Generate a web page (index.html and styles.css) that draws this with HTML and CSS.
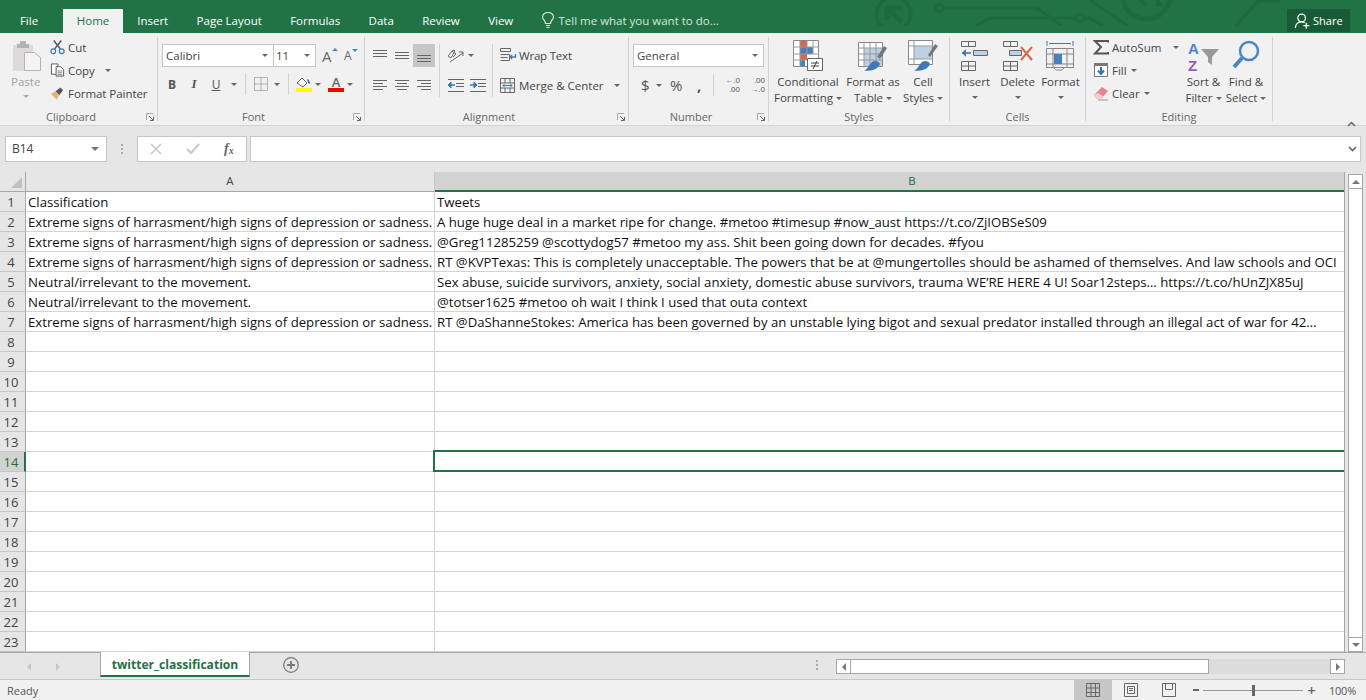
FILE: index.html
```html
<!DOCTYPE html>
<html lang="en">
<head>
<meta charset="utf-8">
<title>twitter_classification - Excel</title>
<link rel="stylesheet" href="styles.css">
</head>
<body>
<div class="app">
  <header class="titlebar">
    <svg class="circuit" width="440" height="26" viewBox="840 0 440 26" fill="none" stroke="#1e6a40" stroke-width="3">
      <circle cx="893.500" cy="14" r="17" stroke-width="4"/>
      <path d="M887 20V8h14M888 9l14 13" stroke-width="5"/>
      <circle cx="939" cy="8" r="3.500" stroke-width="2.500"/>
      <path d="M943 8h94l25 18M976 26l14-8h86"/>
      <circle cx="1080" cy="18" r="4" stroke-width="2.500"/>
      <path d="M1084 18h6l13 8M1090 0l38 26M1236 26l22-25h22"/>
      <circle cx="1146.500" cy="-5" r="24" stroke-width="5"/>
      <path d="M1140 0l6 5M1158 0v5h5" stroke-width="4"/>
    </svg>
    <nav class="tabs">
      <span class="tab tab-file">File</span>
      <span class="tab tab-home">Home</span>
      <span class="tab">Insert</span>
      <span class="tab">Page Layout</span>
      <span class="tab">Formulas</span>
      <span class="tab">Data</span>
      <span class="tab">Review</span>
      <span class="tab">View</span>
      <span class="tell">
        <svg width="14" height="17" viewBox="0 0 14 17" fill="none" stroke="#d6e6dc" stroke-width="1.200"><path d="M4.500 11.500C4.500 8.500 1.500 7.500 1.500 5a5.500 4.500 0 0 1 11 0c0 2.500-3 3.500-3 6.500zM5 13.500h4M5.500 15.500h3"/></svg>
        Tell me what you want to do...
      </span>
    </nav>
    <span class="share">
      <svg width="17" height="18" viewBox="0 0 20 20" fill="none" stroke="#fff" stroke-width="1.500"><circle cx="9" cy="6.500" r="4.500"/><path d="M1.500 18c.5-4 3-7 7.500-7 1.500 0 2.500.3 3.500 1M11 15.500h7M14.500 12v7"/></svg>
      Share
    </span>
  </header>

  <section class="ribbon">
    <div class="group g-clip">
      <div class="group-body clip-body">
        <div class="paste">
          <svg width="28" height="30" viewBox="0 0 28 30"><path d="M0 4h20v26H0z" fill="#ded9dc"/><path d="M7 3h6V0H7zM4 3h12v4H4z" fill="#b5b2b4"/><path d="M11.500 11.500h10l6 5v13h-16z" fill="#f4f3f4" stroke="#b5b2b4"/></svg>
          <span class="paste-label">Paste</span>
          <span class="caret caret-light"></span>
        </div>
        <div class="clip-list">
          <div class="clip-item">
            <svg width="15" height="16" viewBox="0 0 16 16" fill="none"><path d="M4 1l7 9M12 1l-7 9" stroke="#555" stroke-width="1.600"/><circle cx="3.500" cy="12.500" r="2.500" stroke="#3f78b5" stroke-width="1.300"/><circle cx="12.500" cy="12.500" r="2.500" stroke="#3f78b5" stroke-width="1.300"/></svg>
            <span>Cut</span>
          </div>
          <div class="clip-item">
            <svg width="15" height="16" viewBox="0 0 16 16" fill="#fff" stroke="#555"><path d="M1.500 1.500h7v11h-7z"/><path d="M6.500 4.500h5l3 3v7h-8z"/><path d="M8 9h5M8 11h5M8 13h5" stroke-width=".8"/></svg>
            <span>Copy</span><span class="caret copy-caret"></span>
          </div>
          <div class="clip-item">
            <svg width="15" height="16" viewBox="0 0 16 16"><path d="M1 9l6 6 3-5-4-4z" fill="#e5b36f"/><path d="M6 6l5-4 3 3-4 5z" fill="#555"/></svg>
            <span>Format Painter</span>
          </div>
        </div>
      </div>
      <div class="group-label has-launcher">Clipboard<svg class="launcher" width="8" height="8" viewBox="0 0 8 8" fill="none"><path d="M.5 7V.5H7" stroke="#aaa"/><path d="M3 3l4 4M7.500 4v3.500H4" stroke="#666"/></svg></div>
    </div>

    <div class="group g-font">
      <div class="group-body stack">
        <div class="row font-row">
          <div class="combo combo-font">Calibri<span class="caret"></span></div>
          <div class="combo combo-size">11<span class="caret"></span></div>
          <span class="grow-a">A<i class="tip tip-up"></i></span>
          <span class="shrink-a">A<i class="tip tip-down"></i></span>
        </div>
        <div class="row format-row">
          <b class="fmt fmt-b">B</b>
          <i class="fmt fmt-i">I</i>
          <u class="fmt fmt-u">U</u>
          <span class="caret"></span>
          <span class="vsep sep-a"></span>
          <svg class="borders" width="14" height="14" viewBox="0 0 14 14" fill="none" stroke="#777" stroke-dasharray="1 1"><path d="M.5.500h13v13H.5zM7 .5v13M.5 7h13"/></svg>
          <span class="caret caret-b"></span>
          <span class="vsep sep-b"></span>
          <span class="colorbtn">
            <svg width="16" height="11" viewBox="0 0 16 11"><path d="M1 6l5-5 5 5-4 4z" fill="#fff" stroke="#666"/><path d="M11 2c2 .5 3 2 3 5l-2-1z" fill="#3f78b5"/></svg>
            <i class="bar bar-yellow"></i>
          </span>
          <span class="caret caret-c"></span>
          <span class="colorbtn colorbtn-a">
            <span class="a-letter">A</span>
            <i class="bar bar-red"></i>
          </span>
          <span class="caret caret-d"></span>
        </div>
      </div>
      <div class="group-label has-launcher">Font<svg class="launcher" width="8" height="8" viewBox="0 0 8 8" fill="none"><path d="M.5 7V.5H7" stroke="#aaa"/><path d="M3 3l4 4M7.500 4v3.500H4" stroke="#666"/></svg></div>
    </div>

    <div class="group g-align">
      <div class="group-body align-body">
        <div class="align-icons">
          <span class="lines"><svg width="14" height="14" viewBox="0 0 14 14" stroke="#666"><path d="M0 1.500h14M0 4.500h14M0 7.500h14"/></svg></span>
          <span class="lines"><svg width="14" height="14" viewBox="0 0 14 14" stroke="#666"><path d="M0 3.500h14M0 6.500h14M0 9.500h14"/></svg></span>
          <span class="lines lines-on"><svg width="14" height="14" viewBox="0 0 14 14" stroke="#666"><path d="M0 6.500h14M0 9.500h14M0 12.500h14"/></svg></span>
          <span class="lines"><svg width="14" height="12" viewBox="0 0 14 12" stroke="#666"><path d="M0 .5h14M0 3.500h10M0 6.500h14M0 9.500h10"/></svg></span>
          <span class="lines"><svg width="14" height="12" viewBox="0 0 14 12" stroke="#666"><path d="M0 .5h14M2 3.500h10M0 6.500h14M2 9.500h10"/></svg></span>
          <span class="lines"><svg width="14" height="12" viewBox="0 0 14 12" stroke="#666"><path d="M0 .5h14M4 3.500h10M0 6.500h14M4 9.500h10"/></svg></span>
        </div>
        <div class="align-mid">
          <div class="orient">
            <svg width="17" height="15" viewBox="0 0 17 15" fill="none" stroke="#666"><path d="M1 8l5-6 2 1-4 7zM5 3l4 3-3 3M3 14l13-9M12 4h4v4" /></svg>
            <span class="caret"></span>
          </div>
          <span class="hsep"></span>
          <div class="indent">
            <svg width="17" height="14" viewBox="0 0 17 14" stroke="#666" fill="none"><path d="M1 .5h16M9 4.500h8M9 7.500h8M1 12.500h16"/><path d="M1 6h7" stroke="#3f78b5" stroke-width="1.500"/><path d="M4 3L1 6l3 3z" fill="#3f78b5" stroke="#3f78b5"/></svg>
            <svg width="17" height="14" viewBox="0 0 17 14" stroke="#666" fill="none"><path d="M1 .5h16M9 4.500h8M9 7.500h8M1 12.500h16"/><path d="M1 6h6" stroke="#3f78b5" stroke-width="1.500"/><path d="M5 3l3 3-3 3z" fill="#3f78b5" stroke="#3f78b5"/></svg>
          </div>
        </div>
        <div class="align-wrap">
          <div class="wrap-item">
            <svg width="17" height="15" viewBox="0 0 17 15" fill="none" stroke="#666"><path d="M.5.500h10v3H.5zM.5 6.500h9M.5 9.500h7M.5 12.500h9V6.500" /><path d="M10 9h5.500V6M10 9l2-2M10 9l2 2" stroke="#3f78b5" stroke-width="1.300"/></svg>
            <span class="wrap-label">Wrap Text</span>
          </div>
          <div class="wrap-item merge-item">
            <svg width="15" height="15" viewBox="0 0 15 15" fill="none" stroke="#666"><path d="M.5.500h14v14H.5zM.5 5h14M.5 10h14M5 .5V5M10 .5V5M5 10v4.500M10 10v4.500"/><path d="M3 7.500h9M3 7.500l1.500-1.500M3 7.500L4.500 9M12 7.500L10.500 6M12 7.500L10.500 9" stroke="#3f78b5"/></svg>
            <span class="merge-label">Merge &amp; Center</span>
            <span class="caret"></span>
          </div>
        </div>
      </div>
      <div class="group-label has-launcher">Alignment<svg class="launcher" width="8" height="8" viewBox="0 0 8 8" fill="none"><path d="M.5 7V.5H7" stroke="#aaa"/><path d="M3 3l4 4M7.500 4v3.500H4" stroke="#666"/></svg></div>
    </div>

    <div class="group g-number">
      <div class="group-body stack">
        <div class="combo combo-number">General<span class="caret"></span></div>
        <div class="row number-row">
          <span class="dollar">$</span><span class="caret"></span>
          <span class="percent">%</span>
          <span class="comma">,</span>
          <span class="vsep"></span>
          <span class="dec"><em class="dec-blue">←</em>.0<br>.00</span>
          <span class="dec dec-2">.00<br><em class="dec-blue">→</em>.0</span>
        </div>
      </div>
      <div class="group-label has-launcher">Number<svg class="launcher" width="8" height="8" viewBox="0 0 8 8" fill="none"><path d="M.5 7V.5H7" stroke="#aaa"/><path d="M3 3l4 4M7.500 4v3.500H4" stroke="#666"/></svg></div>
    </div>

    <div class="group g-styles">
      <div class="group-body big-row">
        <div class="big big-cf">
          <svg width="30" height="32" viewBox="0 0 30 32"><path d="M.5.500h25v26H.5z" fill="#fff" stroke="#888"/><path d="M7 1h7v6H7zM7 14h7v6H7z" fill="#d9674a"/><path d="M7 7h13v7H7zM7 20h5v6H7z" fill="#4a7fbd"/><path d="M7 0v27M14 0v14M20 0v14M0 7h26M0 14h26M0 20h14" stroke="#999" fill="none"/><path d="M14.500 18.500h15v12h-15z" fill="#fff" stroke="#666"/><path d="M18 23h8M18 26h8M24 21l-4 8" stroke="#444" fill="none"/></svg>
          <span>Conditional</span>
          <span>Formatting<i class="caret inline-caret"></i></span>
        </div>
        <div class="big big-ft">
          <svg width="30" height="32" viewBox="0 0 30 32"><path d="M.5 2.500h24v24H.5z" fill="#fff" stroke="#888"/><path d="M6 8h18v18H6z" fill="#bcd0e6"/><path d="M.5 8h24M.5 14h24M.5 20h24M6 2.500v24M12 2.500v24M18 2.500v24" stroke="#999" fill="none"/><path d="M19 17l7-11 3 2-7 11z" fill="#777"/><path d="M6 31c3-1 5-6 8-9 3-2 7-1 8 2-2 4-5 7-16 7z" fill="#3f78b5"/></svg>
          <span>Format as</span>
          <span>Table<i class="caret inline-caret"></i></span>
        </div>
        <div class="big big-cs">
          <svg width="30" height="32" viewBox="0 0 30 32"><path d="M.5.500h24v24H.5z" fill="#fff" stroke="#888"/><path d="M6 6h18v13H6z" fill="#bcd0e6"/><path d="M.5 6h24M.5 19h24M6 .5V25" stroke="#999" fill="none"/><path d="M20 15l7-11 3 2-8 11z" fill="#777"/><path d="M6 31c3-1 5-6 8-9 3-2 7-1 8 2-2 4-5 7-16 7z" fill="#3f78b5"/></svg>
          <span>Cell</span>
          <span>Styles<i class="caret inline-caret"></i></span>
        </div>
      </div>
      <div class="group-label">Styles</div>
    </div>

    <div class="group g-cells">
      <div class="group-body big-row">
        <div class="big big-cell">
          <svg width="27" height="32" viewBox="0 0 27 32" fill="none"><path d="M.5 1.500h14v5H.5zM7.500 1.500v5M.5 21.500h14v9H.5zM.5 26h14M7.500 21.500v9M12.500 10.500h14v5h-14zM19.500 10.500v5" stroke="#666"/><path d="M13 11h13v4H13z" fill="#bcd0e6"/><path d="M1 13h9" stroke="#3f78b5" stroke-width="1.600"/><path d="M5 9l-4 4 4 4z" fill="#3f78b5"/></svg>
          <span>Insert</span><i class="caret big-caret"></i>
        </div>
        <div class="big big-cell big-del">
          <svg width="30" height="32" viewBox="0 0 30 32" fill="none"><path d="M.5 1.500h14v5H.5zM7.500 1.500v5M.5 21.500h14v9H.5zM.5 26h14M7.500 21.500v9M6.500 10.500h12v5h-12z" stroke="#666"/><path d="M7 11h11v4H7z" fill="#bcd0e6"/><path d="M18 7l11 13M29 7L18 20" stroke="#d9674a" stroke-width="2"/></svg>
          <span>Delete</span><i class="caret big-caret"></i>
        </div>
        <div class="big big-cell">
          <svg width="29" height="32" viewBox="0 0 29 32" fill="none"><path d="M1 1v5M27 1v5M3 3.500h22" stroke="#3f78b5"/><path d="M.5 8.500h27v19H.5zM.5 14h27M.5 24h27M7 8v20M21 8v20" stroke="#888"/><path d="M8 14h8v10H8z" fill="#4a7fbd"/><path d="M8 28l2 2h6l2-2" stroke="#888"/></svg>
          <span>Format</span><i class="caret big-caret"></i>
        </div>
      </div>
      <div class="group-label">Cells</div>
    </div>

    <div class="group g-edit">
      <div class="group-body edit-body">
        <div class="edit-list">
          <div class="edit-item">
            <svg width="16" height="15" viewBox="0 0 16 15" fill="none" stroke="#555" stroke-width="2"><path d="M15 2.500V1H2l6 6-6 6.500h13V12"/></svg>
            <span>AutoSum</span><span class="caret edit-caret"></span>
          </div>
          <div class="edit-item">
            <svg width="16" height="16" viewBox="0 0 16 16"><path d="M1.500 1.500h13v13h-13z" fill="#fff" stroke="#777"/><path d="M1 1h14v3H1z" fill="#777"/><path d="M8 5v7M5 8.500l3 3.500 3-3.500" fill="none" stroke="#2e75b6" stroke-width="2"/></svg>
            <span>Fill</span><i class="caret"></i>
          </div>
          <div class="edit-item">
            <svg width="16" height="16" viewBox="0 0 16 16"><path d="M1 10l8-8 6 4-7 8H4z" fill="#e8828c"/><path d="M1 10l3 4h4l2-3-5-3z" fill="#f0d0d3"/><path d="M5 15h10" stroke="#999"/></svg>
            <span>Clear</span><i class="caret"></i>
          </div>
        </div>
        <div class="big big-sort">
          <svg width="32" height="32" viewBox="0 0 32 32"><path d="M13 9h18l-7 8v8l-4-3v-5z" fill="#999"/><text x="0" y="14" class="az az-a">A</text><text x="0" y="31" class="az az-z">Z</text></svg>
          <span>Sort &amp;</span>
          <span>Filter<i class="caret inline-caret"></i></span>
        </div>
        <div class="big big-find">
          <svg width="28" height="32" viewBox="0 0 28 32" fill="none" stroke="#4a86c5"><circle cx="17" cy="11" r="9" stroke-width="2.500"/><path d="M10 18L2 27" stroke-width="4"/></svg>
          <span>Find &amp;</span>
          <span>Select<i class="caret inline-caret"></i></span>
        </div>
      </div>
      <div class="group-label">Editing</div>
    </div>
    <div class="collapse"><svg width="9" height="6" viewBox="0 0 9 6" fill="none" stroke="#666" stroke-width="1.500"><path d="M1 5l3.500-3.500L8 5"/></svg></div>
  </section>

  <section class="formulabar">
    <div class="namebox">B14<span class="caret"></span></div>
    <span class="dots"></span>
    <div class="fx-buttons">
      <svg width="12" height="12" viewBox="0 0 12 12" stroke="#c8c8c8" stroke-width="1.600" fill="none"><path d="M1 1l10 10M11 1L1 11"/></svg>
      <svg width="14" height="12" viewBox="0 0 14 12" stroke="#c8c8c8" stroke-width="2" fill="none"><path d="M1 6l4 4 8-9"/></svg>
      <span class="fx">f<sub>x</sub></span>
    </div>
    <div class="formula-input">
      <svg width="9" height="6" viewBox="0 0 9 6" fill="none" stroke="#666" stroke-width="1.700"><path d="M1 1l3.500 3.500L8 1"/></svg>
    </div>
  </section>

  <section class="sheet">
    <div class="gridwrap">
      <table class="grid">
        <colgroup><col class="col-h"><col class="col-a"><col class="col-b"></colgroup>
        <thead>
          <tr><th class="corner"><i class="corner-tri"></i></th><th class="colhead">A</th><th class="colhead colhead-on">B</th></tr>
        </thead>
        <tbody>
          <tr><th>1</th><td>Classification</td><td>Tweets</td></tr>
          <tr><th>2</th><td>Extreme signs of harrasment/high signs of depression or sadness.</td><td>A huge huge deal in a market ripe for change. #metoo #timesup #now_aust https://t.co/ZjIOBSeS09</td></tr>
          <tr><th>3</th><td>Extreme signs of harrasment/high signs of depression or sadness.</td><td>@Greg11285259 @scottydog57 #metoo my ass. Shit been going down for decades. #fyou</td></tr>
          <tr><th>4</th><td>Extreme signs of harrasment/high signs of depression or sadness.</td><td>RT @KVPTexas: This is completely unacceptable. The powers that be at @mungertolles should be ashamed of themselves. And law schools and OCI</td></tr>
          <tr><th>5</th><td>Neutral/irrelevant to the movement.</td><td>Sex abuse, suicide survivors, anxiety, social anxiety, domestic abuse survivors, trauma WE’RE HERE 4 U! Soar12steps… https://t.co/hUnZJX85uJ</td></tr>
          <tr><th>6</th><td>Neutral/irrelevant to the movement.</td><td>@totser1625 #metoo oh wait I think I used that outa context</td></tr>
          <tr><th>7</th><td>Extreme signs of harrasment/high signs of depression or sadness.</td><td>RT @DaShanneStokes: America has been governed by an unstable lying bigot and sexual predator installed through an illegal act of war for 42…</td></tr>
          <tr><th>8</th><td></td><td></td></tr>
          <tr><th>9</th><td></td><td></td></tr>
          <tr><th>10</th><td></td><td></td></tr>
          <tr><th>11</th><td></td><td></td></tr>
          <tr><th>12</th><td></td><td></td></tr>
          <tr><th>13</th><td></td><td></td></tr>
          <tr><th class="rowhead-on">14</th><td></td><td class="active"><i class="active-box"></i></td></tr>
          <tr><th>15</th><td></td><td></td></tr>
          <tr><th>16</th><td></td><td></td></tr>
          <tr><th>17</th><td></td><td></td></tr>
          <tr><th>18</th><td></td><td></td></tr>
          <tr><th>19</th><td></td><td></td></tr>
          <tr><th>20</th><td></td><td></td></tr>
          <tr><th>21</th><td></td><td></td></tr>
          <tr><th>22</th><td></td><td></td></tr>
          <tr><th>23</th><td></td><td></td></tr>
        </tbody>
      </table>
    </div>
    <div class="vscroll">
      <span class="sbtn"><i class="arr arr-up"></i></span>
      <span class="vthumb"></span>
      <span class="sbtn"><i class="arr arr-down"></i></span>
    </div>
  </section>

  <section class="tabbar">
    <div class="sheetnav"><i class="nav nav-l"></i><i class="nav nav-r"></i></div>
    <div class="sheettab">twitter_classification</div>
    <span class="addsheet">
      <svg width="16" height="16" viewBox="0 0 16 16" fill="none" stroke="#777"><circle cx="8" cy="8" r="7.300" stroke-width="1.200"/><path d="M8 4v8M4 8h8" stroke-width="1.800"/></svg>
    </span>
    <span class="dots dots-tab"></span>
    <div class="hscroll">
      <span class="hbtn"><i class="nav nav-l nav-dark"></i></span>
      <span class="hthumb"></span>
      <span class="htrack"></span>
      <span class="hbtn"><i class="nav nav-r nav-dark"></i></span>
    </div>
  </section>

  <footer class="statusbar">
    <span class="ready">Ready</span>
    <div class="views">
      <span class="view view-on"><svg width="14" height="14" viewBox="0 0 14 14" fill="none" stroke="#666"><path d="M.5.500h13v13H.5zM.5 5h13M.5 9.500h13M5 .5v13M9.500 .5v13"/></svg></span>
      <span class="view"><svg width="14" height="14" viewBox="0 0 14 14" fill="none" stroke="#666"><path d="M.5.500h13v13H.5zM3.500 3.500h7v7h-7zM5 5.500h4M5 7.500h4"/></svg></span>
      <span class="view"><svg width="14" height="14" viewBox="0 0 14 14" fill="none" stroke="#666"><path d="M.5.500h13v13H.5zM3.500 .5v6h7v-6"/></svg></span>
    </div>
    <div class="zoomer">
      <i class="zoom-minus"></i>
      <span class="zoom-line"><i class="zoom-thumb"></i></span>
      <span class="zoom-plus">+</span>
    </div>
    <span class="pct">100%</span>
  </footer>
</div>
</body>
</html>
```
FILE: styles.css
```css
* { box-sizing: border-box; }
html, body { margin: 0; height: 100%; overflow: hidden; }
body { font-family: "Open Sans", "Noto Sans", sans-serif; font-size: 12px; color: #444; background: #e6e6e6; }
.app { width: 1366px; height: 700px; display: flex; flex-direction: column; }

/* title bar */
.titlebar { position: relative; height: 33px; background: #217346; flex: none; display: flex; color: #fff; overflow: hidden; }
.tabs { display: flex; align-items: flex-end; height: 33px; padding-top: 9px; position: relative; z-index: 1; }
.tab { height: 24px; line-height: 24px; font-size: 11.500px; color: #fff; padding: 0 14.200px; flex: none; }
.tab-file { width: 63px; padding: 0 5px 0 0; text-align: center; }
.tab-home { width: 60px; padding: 0; text-align: center; background: #f1f1f1; color: #217346; }
.tell { display: flex; align-items: center; gap: 3px; margin-left: 14px; height: 24px; padding-bottom: 1px; font-size: 11.500px; color: #d6e6dc; }
.circuit { position: absolute; left: 840px; top: 0; }
.share { position: absolute; left: 1287px; top: 9px; width: 63px; height: 23px; background: #185c37; display: flex; align-items: center; gap: 2px; padding-left: 7px; font-size: 11px; color: #fff; }

/* ribbon */
.ribbon { height: 93px; flex: none; background: #f1f1f1; border-bottom: 1px solid #d4d4d4; display: flex; align-items: flex-start; padding-top: 4px; position: relative; }
.group { display: flex; flex-direction: column; flex: none; border-right: 1px solid #d2d2d2; height: 84px; position: relative; }
.group-body { height: 73px; flex: none; }
.group-label { height: 11px; line-height: 14px; text-align: center; font-size: 11px; color: #666; position: relative; }
.has-launcher { padding-right: 15px; }
.launcher { position: absolute; right: 3px; top: 3px; }
.g-clip { width: 158px; }
.g-font { width: 207px; }
.g-align { width: 264px; }
.g-number { width: 140px; }
.g-styles { width: 181px; }
.g-cells { width: 136px; }
.g-edit { width: 187px; }
.caret { display: inline-block; width: 0; height: 0; border-left: 3px solid transparent; border-right: 3px solid transparent; border-top: 3px solid #666; flex: none; }
.caret-light { border-top-color: #aaa; }

.clip-body { display: flex; padding: 2px 0 0 9px; }
.paste { width: 41px; display: flex; flex-direction: column; align-items: flex-start; padding: 2px 0 0 4px; color: #a3a3a3; }
.paste-label { font-size: 11.500px; margin: 3px 0 0 -2px; line-height: 16px; }
.paste .caret { margin: 5px 0 0 10px; }
.clip-list { display: flex; flex-direction: column; gap: 7px; }
.clip-item { display: flex; align-items: center; gap: 3px; height: 16px; font-size: 11.500px; white-space: nowrap; letter-spacing: -.05px; }
.copy-caret { margin-left: 7px; }

.stack { display: flex; flex-direction: column; }
.row { display: flex; align-items: center; }
.g-font .stack { padding: 7px 0 0 4px; }
.combo { background: #fff; border: 1px solid #c6c6c6; height: 23px; line-height: 21px; font-size: 11.500px; padding-left: 3px; position: relative; color: #444; flex: none; }
.combo .caret { position: absolute; right: 5px; top: 9px; }
.combo-font { width: 112px; }
.combo-size { width: 43px; margin-left: -1px; padding-left: 2px; }
.grow-a, .shrink-a { position: relative; color: #666; flex: none; }
.grow-a { font-size: 15px; margin-left: 6px; width: 16px; }
.shrink-a { font-size: 12px; margin-left: 6px; width: 14px; }
.tip { position: absolute; top: 2px; right: 0; border-left: 3px solid transparent; border-right: 3px solid transparent; }
.tip-up { border-bottom: 3px solid #4a86c5; }
.tip-down { border-top: 3px solid #4a86c5; }
.format-row { margin-top: 6px; height: 22px; }
.fmt { font-size: 12px; color: #555; font-style: normal; flex: none; width: 22px; text-align: center; }
.fmt-b { margin-left: -1px; font-weight: 700; }
.fmt-i { font-style: italic; font-family: "Liberation Serif", serif; font-weight: 700; font-size: 13px; }
.vsep { width: 1px; height: 22px; background: #d2d2d2; flex: none; }
.format-row .caret { margin-left: 4px; }
.sep-a { margin-left: 8px; }
.borders { margin-left: 8px; }
.format-row .caret-b { margin-left: 6px; }
.sep-b { margin-left: 8px; }
.colorbtn { display: flex; flex-direction: column; align-items: center; width: 16px; margin-left: 7px; height: 16px; justify-content: flex-end; position: relative; }
.colorbtn-a { margin-left: 7px; }
.a-letter { font-size: 13px; line-height: 11px; font-weight: 600; color: #666; }
.bar { display: block; width: 16px; height: 4px; flex: none; }
.bar-yellow { background: #ffff00; }
.bar-red { background: #ff0000; }
.format-row .caret-c, .format-row .caret-d { margin-left: 3px; }

.align-body { display: flex; }
.align-icons { display: grid; grid-template-columns: repeat(3, 22px); grid-template-rows: 23px 23px; row-gap: 7px; width: 66px; margin: 7px 0 0 4px; flex: none; }
.lines { display: flex; align-items: center; justify-content: center; }
.lines-on { background: #c6c6c6; }
.align-mid { display: flex; flex-direction: column; border-left: 1px solid #d2d2d2; margin: 7px 0 0 4px; height: 53px; padding-left: 7px; width: 53px; flex: none; }
.orient { display: flex; align-items: center; gap: 4px; height: 23px; }
.hsep { height: 7px; }
.indent { display: flex; gap: 5px; height: 23px; align-items: center; }
.align-wrap { display: flex; flex-direction: column; border-left: 1px solid #d2d2d2; margin-top: 7px; padding-left: 7px; height: 53px; gap: 7px; flex: none; }
.wrap-item { display: flex; align-items: center; gap: 2px; height: 23px; font-size: 11.500px; white-space: nowrap; }
.wrap-label { letter-spacing: -.2px; }
.merge-label { margin-left: 2px; }
.merge-item .caret { margin-left: 8px; }

.g-number .stack { padding: 7px 0 0 4px; }
.combo-number { width: 131px; }
.number-row { margin-top: 7px; height: 22px; padding-left: 8px; }
.dollar { font-size: 15px; color: #555; width: 12px; }
.number-row .caret { margin-left: 3px; }
.percent { font-size: 15px; color: #555; margin-left: 8px; width: 18px; }
.comma { font-weight: 700; font-size: 15px; color: #555; line-height: 14px; margin-left: 9px; width: 12px; }
.number-row .vsep { margin-left: 4px; }
.dec { font-family: "Liberation Sans", sans-serif; font-size: 8px; line-height: 9px; text-align: right; margin-left: 4px; width: 22px; color: #555; }
.dec-2 { margin-left: 3px; }
.dec-blue { color: #2e75b6; font-style: normal; }

.big-row { display: flex; padding-top: 3px; }
.big { display: flex; flex-direction: column; align-items: center; font-size: 11.500px; line-height: 16px; flex: none; white-space: nowrap; }
.big svg { margin-bottom: 2px; overflow: visible; }
.big-cf { width: 76px; margin-left: 1px; }
.big-ft { width: 54px; }
.big-cs { width: 46px; }
.inline-caret { margin-left: 3px; vertical-align: 2px; }
.big-cell:first-child { margin-left: 3px; }
.big-caret { margin-top: 6px; }
.g-cells .big { width: 43px; }

.edit-body { display: flex; padding-top: 2px; }
.edit-list { width: 97px; display: flex; flex-direction: column; gap: 7px; padding-left: 7px; flex: none; }
.edit-item { display: flex; align-items: center; gap: 3px; height: 16px; font-size: 11.500px; }
.edit-item .caret { margin-left: 1px; }
.edit-item .edit-caret { margin-left: 9px; }
.big-sort, .big-find { padding-top: 1px; }
.big-sort { width: 41px; }
.big-find { width: 44px; }
.az { font-family: "Liberation Sans", sans-serif; font-size: 15px; font-weight: 700; }
.az-a { fill: #4a86c5; }
.az-z { fill: #9b59b6; }
.collapse { position: absolute; left: 1347px; top: 81px; }

/* formula bar */
.formulabar { height: 26px; margin-top: 10px; flex: none; display: flex; padding: 0 5px; }
.namebox { width: 102px; background: #fff; border: 1px solid #c6c6c6; padding-left: 6px; line-height: 24px; font-size: 12px; color: #444; position: relative; }
.namebox .caret { position: absolute; right: 7px; top: 10px; border-left-width: 4px; border-right-width: 4px; border-top-width: 4px; border-top-color: #777; }
.dots { width: 2px; height: 10px; margin: 8px 14px 0 14px; background: repeating-linear-gradient(#aaa 0 2px, transparent 2px 4px); flex: none; }
.fx-buttons { width: 110px; background: #fff; border: 1px solid #c6c6c6; display: flex; align-items: center; padding-left: 12px; gap: 24px; flex: none; }
.fx { font-family: "Liberation Serif", serif; font-style: italic; font-weight: 700; font-size: 14px; color: #666; }
.fx sub { font-size: 10px; vertical-align: -1px; }
.formula-input { flex: 1; background: #fff; border: 1px solid #c6c6c6; margin-left: 3px; display: flex; align-items: center; justify-content: flex-end; padding-right: 3px; }

/* sheet */
.sheet { margin-top: 10px; height: 481px; flex: none; display: flex; position: relative; overflow: hidden; background: #e6e6e6; }
.gridwrap { width: 1345px; flex: none; overflow: hidden; border-right: 1px solid #a6a6a6; height: 480px; }
.grid { table-layout: fixed; border-collapse: separate; border-spacing: 0; width: 1344px; background: #fff; font-size: 13.200px; color: #111; }
.col-h { width: 26px; }
.col-a { width: 409px; }
.col-b { width: 909px; }
.grid th { background: #e6e6e6; font-weight: 400; font-size: 13px; line-height: 17px; color: #444; border-right: 1px solid #a6a6a6; border-bottom: 1px solid #c6c6c6; padding: 2px 3px 0 0; text-align: center; height: 20px; }
.grid thead th { height: 20px; border-bottom: 1px solid #a6a6a6; border-right: 1px solid #c6c6c6; font-size: 11.500px; padding: 0 0 2px; }
.grid thead .corner { position: relative; border-right: 1px solid #a6a6a6; }
.corner-tri { position: absolute; right: 3px; bottom: 3px; width: 0; height: 0; border-left: 11px solid transparent; border-bottom: 11px solid #c0c0c0; }
.grid thead .colhead-on { background: #d2d2d2; border-bottom: 2px solid #217346; border-right: 0; color: #1f6b42; padding: 0 0 1px 45px; }
.grid td { height: 20px; padding: 2px 0 0 2px; border-right: 1px solid #d4d4d4; border-bottom: 1px solid #d4d4d4; white-space: nowrap; overflow: hidden; line-height: 17px; }
.grid td:last-child { border-right: 0; }
.grid .rowhead-on { background: #d2d2d2; color: #1f6b42; border-right: 2px solid #217346; padding-right: 2px; }
.grid td.active { position: relative; overflow: visible; }
.active-box { position: absolute; left: -2px; top: -2px; right: 0; bottom: -1px; border: 2px solid #217346; border-right: 0; }

.vscroll { width: 21px; flex: none; display: flex; flex-direction: column; padding: 2px 0 0 3px; height: 480px; }
.sbtn { width: 15px; height: 15px; background: #fff; border: 1px solid #a6a6a6; display: flex; align-items: center; justify-content: center; flex: none; }
.arr { width: 0; height: 0; border-left: 4px solid transparent; border-right: 4px solid transparent; }
.arr-up { border-bottom: 4px solid #777; }
.arr-down { border-top: 4px solid #777; }
.vthumb { flex: 1; display: block; width: 15px; background: #fff; border: 1px solid #a6a6a6; margin: -1px 0; }

/* sheet tabs */
.tabbar { height: 28px; flex: none; display: flex; position: relative; border-top: 1px solid #a6a6a6; border-bottom: 1px solid #c6c6c6; background: #e6e6e6; margin-top: -1px; }
.sheetnav { width: 100px; display: flex; gap: 25px; padding: 10px 0 0 27px; flex: none; }
.nav { width: 0; height: 0; border-top: 4px solid transparent; border-bottom: 4px solid transparent; display: block; }
.nav-l { border-right: 4px solid #c6c6c6; }
.nav-r { border-left: 4px solid #c6c6c6; }
.nav-dark.nav-l { border-right-color: #777; }
.nav-dark.nav-r { border-left-color: #777; }
.sheettab { width: 150px; height: 25px; margin-top: -1px; padding-top: 1px; background: #fff; border-left: 1px solid #a6a6a6; border-right: 1px solid #a6a6a6; border-bottom: 2px solid #217346; color: #217346; font-weight: 700; font-size: 12.100px; text-align: center; line-height: 24px; flex: none; }
.addsheet { margin: 4px 0 0 33px; flex: none; display: block; height: 16px; }
.dots-tab { margin: 7px 0 0 517px; }
.hscroll { position: absolute; left: 836px; top: 6px; width: 509px; height: 15px; display: flex; }
.hbtn { width: 15px; height: 15px; background: #fff; border: 1px solid #a6a6a6; display: flex; align-items: center; justify-content: center; flex: none; }
.hthumb { width: 359px; background: #fff; border: 1px solid #a6a6a6; margin-left: -1px; flex: none; }
.htrack { flex: 1; background: #dcdcdc; }

/* status */
.statusbar { height: 20px; flex: none; background: #f1f1f1; display: flex; align-items: center; font-size: 11px; color: #555; position: relative; }
.ready { margin-left: 7px; padding-top: 1px; }
.views { display: flex; margin-left: 1036px; height: 20px; }
.view { width: 38px; display: flex; align-items: center; justify-content: center; }
.view-on { background: #c6c6c6; }
.zoomer { display: flex; align-items: center; margin-left: 5px; }
.zoom-minus { width: 6px; height: 2px; background: #666; display: block; }
.zoom-line { display: block; width: 100px; height: 1px; background: #999; margin: 0 4px; position: relative; }
.zoom-thumb { position: absolute; left: 49px; top: -5px; width: 3px; height: 11px; background: #666; }
.zoom-plus { font-size: 15px; font-weight: 600; color: #666; line-height: 14px; }
.pct { margin-left: 13px; font-size: 11px; letter-spacing: -.2px; color: #555; }
```
